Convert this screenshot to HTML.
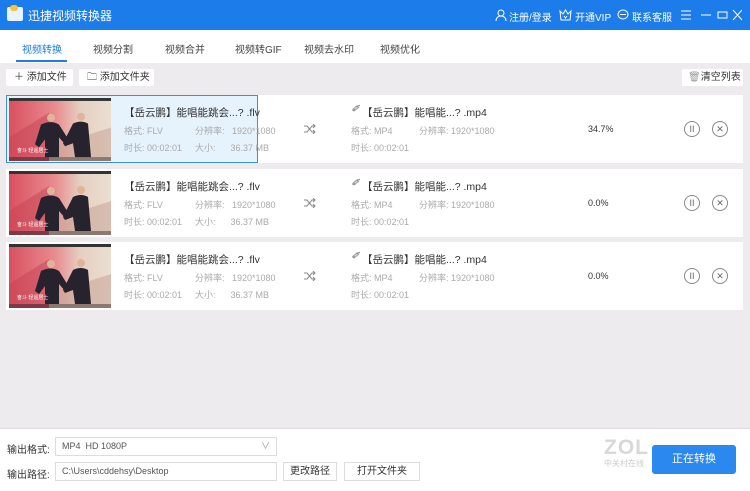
<!DOCTYPE html>
<html><head><meta charset="utf-8"><style>
*{margin:0;padding:0;box-sizing:border-box}
body{width:750px;height:491px;overflow:hidden;background:#edebee;font-family:"Liberation Sans","Noto Sans CJK SC",sans-serif;position:relative;font-size:10px;color:#333}
.a{position:absolute;white-space:nowrap}
.title{left:0;top:0;width:750px;height:30px;background:#1c7ce9;color:#fff}
.tabs{left:0;top:30px;width:750px;height:33px;background:#fff}
.tab{top:41px;font-size:10px;color:#444}
.btn{background:#fff;border-radius:2px;height:17px;top:69px;font-size:10px;color:#333;line-height:17px;padding-left:8px}
.row{left:6px;width:737px;height:68px;background:#fff}
.g{color:#aaa;font-size:9px}
.n{font-size:10.5px;color:#333}
.circ{width:16px;height:16px;border:1px solid #888;border-radius:50%;font-size:9px;color:#666;text-align:center;line-height:14px}
.bottom{left:0;top:428px;width:750px;height:63px;background:#fff;border-top:1px solid #ddd}
.inp{border:1px solid #ddd;background:#fff;height:19px;line-height:17px;font-size:9px;color:#555;padding-left:6px}
.b2{border:1px solid #ddd;background:#fff;height:19px;line-height:17px;font-size:10px;text-align:center}
</style></head><body>
<div class="a title"></div>
<div class="a" style="left:7px;top:7px;width:16px;height:14px;background:#e9f3ff;border-radius:2px"></div>
<div class="a" style="left:10px;top:5px;width:8px;height:6px;background:#f5c342;border-radius:3px"></div>
<div class="a" style="left:28px;top:7px;color:#fff;font-size:12px">迅捷视频转换器</div>
<svg class="a" style="left:495px;top:9px" width="12" height="12" viewBox="0 0 12 12" fill="none" stroke="#fff"><circle cx="6" cy="4" r="3"/><path d="M1 12c0-3 2-5 5-5s5 2 5 5"/></svg>
<div class="a" style="left:509px;top:9px;color:#fff;font-size:10px">注册/登录</div>
<svg class="a" style="left:559px;top:9px" width="13" height="12" viewBox="0 0 13 12" fill="none" stroke="#fff"><path d="M1 2l3 3 2.5-4 2.5 4 3-3-1 9H2z"/><path d="M5 7l1.5 2 1.5-2"/></svg>
<div class="a" style="left:575px;top:9px;color:#fff;font-size:10px">开通VIP</div>
<svg class="a" style="left:617px;top:9px" width="12" height="12" viewBox="0 0 12 12" fill="none" stroke="#fff"><ellipse cx="6" cy="5.5" rx="5" ry="4.5"/><path d="M3 5.5h6"/></svg>
<div class="a" style="left:632px;top:9px;color:#fff;font-size:10px">联系客服</div>
<svg class="a" style="left:680px;top:9px" width="62" height="12" viewBox="0 0 62 12" fill="none" stroke="#fff"><path d="M1 2h10M1 6h10M1 10h10M21 6h10M38 3h9v6h-9zM53 1l9 10M62 1l-9 10" stroke-width="1"/></svg>
<div class="a tabs"></div>
<div class="a tab" style="left:22px;color:#1c7ce9">视频转换</div>
<div class="a" style="left:16px;top:60px;width:51px;height:2px;background:#1c7ce9"></div>
<div class="a tab" style="left:93px">视频分割</div>
<div class="a tab" style="left:165px">视频合并</div>
<div class="a tab" style="left:235px">视频转GIF</div>
<div class="a tab" style="left:304px">视频去水印</div>
<div class="a tab" style="left:380px">视频优化</div>
<div class="a btn" style="left:6px;width:67px">＋ 添加文件</div>
<div class="a btn" style="left:79px;width:75px">🗀 添加文件夹</div>
<div class="a btn" style="left:682px;width:61px;padding-left:6px;color:#333"><span style="color:#999">🗑</span>清空列表</div>

<svg width="0" height="0" style="position:absolute"><defs>
<linearGradient id="bg" x1="0" x2="1"><stop offset="0" stop-color="#d9505f"/><stop offset=".45" stop-color="#e88b8f"/><stop offset=".7" stop-color="#e6cfc2"/><stop offset="1" stop-color="#eadfd2"/></linearGradient>
<symbol id="th" viewBox="0 0 102 64" preserveAspectRatio="none"><rect width="102" height="64" fill="url(#bg)"/><rect width="102" height="3" fill="#333"/><rect y="60" width="102" height="4" fill="#333"/>
<path d="M0 40l40-25v50H0z" fill="#c64255" opacity=".5"/><path d="M40 64V50l62-20v34z" fill="#c9a89a" opacity=".6"/>
<circle cx="42" cy="20" r="4" fill="#e0b49a"/><path d="M32 27q10-5 18 0l10 16-4 4-6-7v20H36V42l-6 8-4-3z" fill="#26222e"/>
<circle cx="72" cy="19" r="4" fill="#e0b49a"/><path d="M64 26q8-4 15 0l3 34H66l-2-14-8 3-2-3z" fill="#26222e"/>
<text x="8" y="55" font-size="5" fill="#fff">奋斗  轻遥居士</text></symbol>
</defs></svg>

<div class="a row" style="top:95px"></div>
<div class="a" style="left:6px;top:95px;width:252px;height:68px;background:#e6f2fc;border:1.5px solid #3d8fd6"></div>
<svg class="a" style="left:9px;top:98px" width="102" height="63"><use href="#th"/></svg>
<div class="a row" style="top:169px"></div>
<svg class="a" style="left:9px;top:171px" width="102" height="64"><use href="#th"/></svg>
<div class="a row" style="top:242px"></div>
<svg class="a" style="left:9px;top:244px" width="102" height="64"><use href="#th"/></svg>

<div id="rows"></div>
<script>
var ys=[95,169,242],ps=["34.7%","0.0%","0.0%"],h="";
ys.forEach(function(y,i){
h+='<div class="a n" style="left:124px;top:'+(y+10)+'px">【岳云鹏】能唱能跳会...?  .flv</div>'+
'<div class="a g" style="left:124px;top:'+(y+29)+'px">格式:  FLV</div>'+
'<div class="a g" style="left:195px;top:'+(y+29)+'px">分辨率:&nbsp;&nbsp; 1920*1080</div>'+
'<div class="a g" style="left:124px;top:'+(y+46)+'px">时长:  00:02:01</div>'+
'<div class="a g" style="left:195px;top:'+(y+46)+'px">大小:&nbsp;&nbsp;&nbsp;&nbsp;&nbsp; 36.37 MB</div>'+
'<svg class="a" style="left:304px;top:'+(y+29)+'px" width="12" height="10" viewBox="0 0 12 10" fill="none" stroke="#888"><path d="M0 2h3l5 6h3M0 8h3l5-6h3M9 0l2 2-2 2M9 6l2 2-2 2"/></svg>'+
'<div class="a" style="left:351px;top:'+(y+9)+'px;font-size:10px;color:#555;font-style:italic">&#x2710;</div>'+
'<div class="a n" style="left:362px;top:'+(y+10)+'px">【岳云鹏】能唱能...?  .mp4</div>'+
'<div class="a g" style="left:351px;top:'+(y+29)+'px">格式:  MP4</div>'+
'<div class="a g" style="left:419px;top:'+(y+29)+'px">分辨率: 1920*1080</div>'+
'<div class="a g" style="left:351px;top:'+(y+46)+'px">时长:  00:02:01</div>'+
'<div class="a" style="left:588px;top:'+(y+29)+'px;font-size:9px;color:#333">'+ps[i]+'</div>'+
'<div class="a circ" style="left:684px;top:'+(y+26)+'px">II</div>'+
'<div class="a circ" style="left:712px;top:'+(y+26)+'px">✕</div>';
});
document.getElementById('rows').innerHTML=h;
</script>

<div class="a bottom"></div>
<div class="a" style="left:7px;top:441px;font-size:10px">输出格式:</div>
<div class="a inp" style="left:55px;top:437px;width:222px">MP4&nbsp; HD 1080P<span style="position:absolute;right:6px;color:#999">∨</span></div>
<div class="a" style="left:7px;top:466px;font-size:10px">输出路径:</div>
<div class="a inp" style="left:55px;top:462px;width:222px">C:\Users\cddehsy\Desktop</div>
<div class="a b2" style="left:283px;top:462px;width:54px">更改路径</div>
<div class="a b2" style="left:344px;top:462px;width:76px">打开文件夹</div>
<div class="a" style="left:604px;top:436px;font-size:21px;color:#d8d8d8;font-weight:bold;letter-spacing:1px">ZOL</div>
<div class="a" style="left:604px;top:458px;font-size:8px;color:#ccc">中关村在线</div>
<div class="a" style="left:652px;top:445px;width:84px;height:29px;background:#2b88ee;border-radius:3px;color:#fff;font-size:11px;text-align:center;line-height:29px">正在转换</div>
</body></html>
